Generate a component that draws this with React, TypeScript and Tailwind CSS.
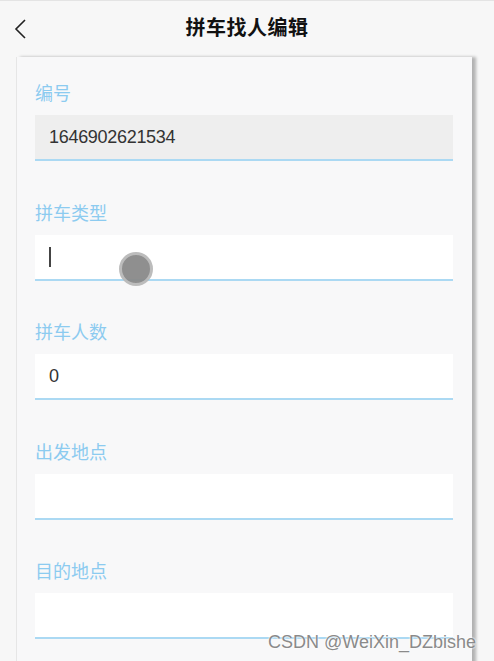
import React from 'react';

const fields = [
  { label: '编号', value: '1646902621534', disabled: true },
  { label: '拼车类型', value: '', caret: true },
  { label: '拼车人数', value: '0' },
  { label: '出发地点', value: '' },
  { label: '目的地点', value: '' },
];

export default function App() {
  return (
    <div
      className="relative w-[494px] h-[661px] overflow-hidden bg-[#f7f7f7] border-t border-[#e4e4e4]"
      style={{ fontFamily: '"Liberation Sans", "Noto Sans CJK SC", sans-serif' }}
    >
      {/* header */}
      <div className="relative h-[56px] flex items-center justify-center">
        <svg className="absolute left-[13px] top-[17px]" width="16" height="22" viewBox="0 0 16 22" fill="none">
          <path d="M12 2 L3 11 L12 20" stroke="#222" strokeWidth="1.6" />
        </svg>
        <h1 className="text-[20px] font-bold text-[#111] tracking-[0.5px] -mt-[3px]">拼车找人编辑</h1>
      </div>

      {/* form card */}
      <div className="ml-[16px] w-[456px] h-[620px] bg-[#f8f8f9] border-l border-[#e6e6e6] shadow-[4px_0_3px_rgba(0,0,0,0.28)] pl-[18px] pr-[19px] pt-[25px]">
        {fields.map((f, i) => (
          <div key={f.label} className={i === 0 ? '' : 'mt-[40.5px]'}>
            <div className="h-[24px] leading-[24px] text-[18px] text-[#8ccbf0] mb-[9px]">{f.label}</div>
            <div
              className={`h-[46px] border-b-2 border-[#abd9f3] flex items-center pl-[14px] text-[18px] text-[#333] tracking-[-0.3px] ${
                f.disabled ? 'bg-[#eeeeee]' : 'bg-white'
              }`}
            >
              {f.caret ? <span className="w-[2px] h-[20px] bg-[#444]" /> : f.value}
            </div>
          </div>
        ))}
      </div>

      {/* touch indicator */}
      <div className="absolute left-[119px] top-[251px] w-[34px] h-[34px] rounded-full bg-[#8a8a8a] border-[3px] border-[#b9b9b9] opacity-95" />

      {/* watermark */}
      <div
        className="absolute left-[268px] top-[628px] text-[18px] text-[#8a8a8a]"
        style={{ textShadow: '0 0 2px #fff, 0 0 2px #fff' }}
      >
        CSDN @WeiXin_DZbishe
      </div>
    </div>
  );
}
